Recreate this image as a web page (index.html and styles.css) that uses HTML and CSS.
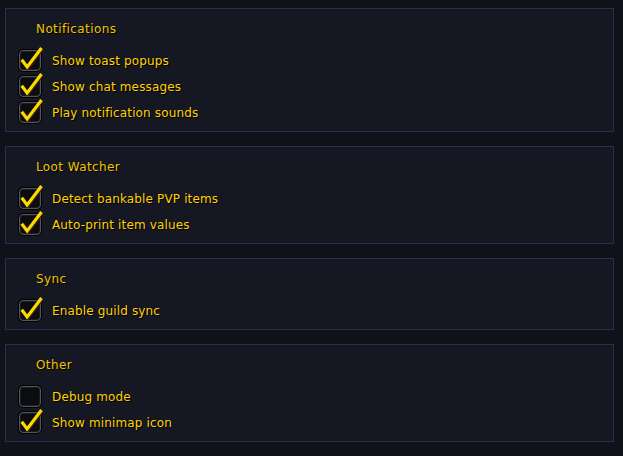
FILE: index.html
```html
<!DOCTYPE html>
<html>
<head>
<meta charset="utf-8">
<link rel="stylesheet" href="styles.css">
</head>
<body>
<div class="page">
  <section class="panel">
    <div class="title">Notifications</div>
    <div class="row"><span class="box on"><svg viewBox="0 0 30 30" class="chk"><path d="M3 13 L9 21 L25 0" /></svg></span><span class="label">Show toast popups</span></div>
    <div class="row"><span class="box on"><svg viewBox="0 0 30 30" class="chk"><path d="M3 13 L9 21 L25 0" /></svg></span><span class="label">Show chat messages</span></div>
    <div class="row"><span class="box on"><svg viewBox="0 0 30 30" class="chk"><path d="M3 13 L9 21 L25 0" /></svg></span><span class="label">Play notification sounds</span></div>
  </section>
  <section class="panel">
    <div class="title">Loot Watcher</div>
    <div class="row"><span class="box on"><svg viewBox="0 0 30 30" class="chk"><path d="M3 13 L9 21 L25 0" /></svg></span><span class="label">Detect bankable PVP items</span></div>
    <div class="row"><span class="box on"><svg viewBox="0 0 30 30" class="chk"><path d="M3 13 L9 21 L25 0" /></svg></span><span class="label">Auto-print item values</span></div>
  </section>
  <section class="panel">
    <div class="title">Sync</div>
    <div class="row"><span class="box on"><svg viewBox="0 0 30 30" class="chk"><path d="M3 13 L9 21 L25 0" /></svg></span><span class="label">Enable guild sync</span></div>
  </section>
  <section class="panel">
    <div class="title">Other</div>
    <div class="row"><span class="box"></span><span class="label">Debug mode</span></div>
    <div class="row"><span class="box on"><svg viewBox="0 0 30 30" class="chk"><path d="M3 13 L9 21 L25 0" /></svg></span><span class="label">Show minimap icon</span></div>
  </section>
</div>
</body>
</html>
```
FILE: styles.css
```css
html, body {
  margin: 0;
  padding: 0;
  background: #101119;
  width: 623px;
  height: 456px;
  overflow: hidden;
}
.page {
  padding: 8px 9px 0 5px;
  display: flex;
  flex-direction: column;
  gap: 14px;
  font-family: "DejaVu Sans", "Liberation Sans", sans-serif;
}
.panel {
  border: 1px solid #25324d;
  background: #151723;
  padding: 11px 0 6px 0;
}
.title {
  height: 16px;
  line-height: 16px;
  padding-top: 1px;
  margin-left: 30px;
  margin-bottom: 10px;
  font-size: 12px;
  letter-spacing: 0.4px;
  color: #f2c400;
  text-shadow: 1px 1px 0 #000;
}
.row {
  height: 26px;
  display: flex;
  align-items: center;
  padding-left: 13px;
}
.box {
  position: relative;
  width: 20px;
  height: 19px;
  border: 1px solid #55565a;
  border-radius: 4px;
  background: #0b0c10;
  box-shadow: inset 0 0 0 1px #1c1c20, 0 0 0 1px #000;
  flex: none;
}
.chk {
  position: absolute;
  left: -1px;
  top: -3px;
  width: 27px;
  height: 27px;
  overflow: visible;
}
.chk path {
  fill: none;
  stroke: #ffd800;
  stroke-width: 3.5;
  stroke-linejoin: miter;
  stroke-linecap: butt;
  filter: drop-shadow(1px 1px 0 #3a2a00);
}
.label {
  margin-left: 11px;
  padding-top: 2px;
  font-size: 12px;
  letter-spacing: 0.15px;
  color: #ffd200;
  text-shadow: 1px 1px 0 #000;
}
```
